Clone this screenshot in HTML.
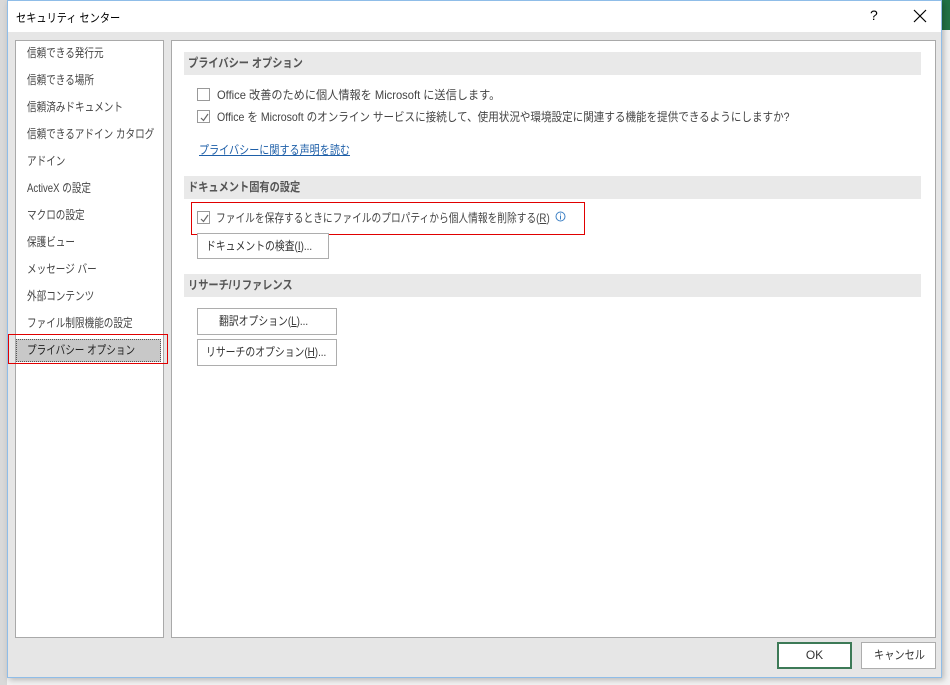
<!DOCTYPE html>
<html><head><meta charset="utf-8"><style>
*{box-sizing:border-box;margin:0;padding:0}
body{width:950px;height:685px;overflow:hidden;background:#f3f3f3;font-family:"Liberation Sans","Noto Sans CJK JP",sans-serif;font-size:12px;color:#444;position:relative}
.a{position:absolute;white-space:nowrap;transform-origin:0 50%}
.dlg{position:absolute;left:7px;top:0;width:935px;height:678px;background:#e6e6e6;border:1px solid #8fbde8;box-shadow:2px 2px 6px rgba(0,0,0,.25)}
.title{position:absolute;left:0;top:0;width:100%;height:31px;background:#fff}
.panel{position:absolute;background:#fff;border:1px solid #a9a9a9}
.hdr{position:absolute;left:184px;width:737px;height:23px;background:#e9e9e9}
.ht{font-weight:bold;color:#555;line-height:23px;transform:scaleX(.85)}
.cb{position:absolute;width:13px;height:13px;border:1px solid #999;background:#fff}
.cb svg{position:absolute;left:1px;top:1px}
.btn{position:absolute;border:1px solid #adadad;background:#fff}
.l{line-height:16px;transform:scaleX(.8)}
u{text-decoration:underline}
</style></head><body>
<div class="a" style="left:0;top:0;width:7px;height:685px;background:#d9d9d9"></div>
<div class="a" style="left:942px;top:0;width:8px;height:30px;background:#217346"></div>
<div class="dlg">
 <div class="title"></div>
 <div class="a" style="left:8px;top:8px;color:#000;transform:scaleX(.85)">セキュリティ センター</div>
 <div class="a" style="left:862px;top:6px;font-size:14px;color:#000">?</div>
 <svg class="a" style="left:905px;top:8px" width="14" height="14"><path d="M1 1L13 13M13 1L1 13" stroke="#000" stroke-width="1.2"/></svg>
</div>
<div class="panel" style="left:15px;top:40px;width:149px;height:598px"></div>
<div class="panel" style="left:171px;top:40px;width:765px;height:598px"></div>
<div class="a" style="left:16px;top:339px;width:145px;height:23px;background:#c8c8c8;border:1px dotted #555"></div>
<div class="a" style="left:8px;top:334px;width:160px;height:30px;border:1px solid #e00000"></div>
<div class="a l" style="left:27px;top:45px">信頼できる発行元</div>
<div class="a l" style="left:27px;top:72px">信頼できる場所</div>
<div class="a l" style="left:27px;top:99px">信頼済みドキュメント</div>
<div class="a l" style="left:27px;top:126px">信頼できるアドイン カタログ</div>
<div class="a l" style="left:27px;top:153px">アドイン</div>
<div class="a l" style="left:27px;top:180px">ActiveX の設定</div>
<div class="a l" style="left:27px;top:207px">マクロの設定</div>
<div class="a l" style="left:27px;top:234px">保護ビュー</div>
<div class="a l" style="left:27px;top:261px">メッセージ バー</div>
<div class="a l" style="left:27px;top:288px">外部コンテンツ</div>
<div class="a l" style="left:27px;top:315px">ファイル制限機能の設定</div>
<div class="a l" style="left:27px;top:342px;color:#222">プライバシー オプション</div>

<div class="hdr" style="top:52px"></div><div class="a ht" style="left:188px;top:52px">プライバシー オプション</div>
<div class="cb" style="left:197px;top:88px"></div>
<div class="a" style="left:217px;top:87px;line-height:16px;transform:scaleX(.93)">Office 改善のために個人情報を Microsoft に送信します。</div>
<div class="cb" style="left:197px;top:110px"><svg width="11" height="11"><path d="M2 6L4.5 8.5L9 2" stroke="#666" fill="none" stroke-width="1.2"/></svg></div>
<div class="a" style="left:217px;top:109px;line-height:16px;transform:scaleX(.88)">Office を Microsoft のオンライン サービスに接続して、使用状況や環境設定に関連する機能を提供できるようにしますか?</div>
<div class="a" style="left:199px;top:142px;line-height:16px;color:#1e5fa8;text-decoration:underline;transform:scaleX(.84)">プライバシーに関する声明を読む</div>

<div class="hdr" style="top:176px"></div><div class="a ht" style="left:188px;top:176px">ドキュメント固有の設定</div>
<div class="a" style="left:191px;top:202px;width:394px;height:33px;border:1px solid #e00000"></div>
<div class="cb" style="left:197px;top:211px"><svg width="11" height="11"><path d="M2 6L4.5 8.5L9 2" stroke="#666" fill="none" stroke-width="1.2"/></svg></div>
<div class="a" style="left:216px;top:210px;line-height:16px;transform:scaleX(.81)">ファイルを保存するときにファイルのプロパティから個人情報を削除する(<u>R</u>)</div>
<svg class="a" style="left:555px;top:211px" width="11" height="11"><circle cx="5.5" cy="5.5" r="4.5" fill="none" stroke="#3b7fc4"/><path d="M5.5 4.5V8.5M5.5 2.5V3.5" stroke="#3b7fc4"/></svg>
<div class="btn" style="left:197px;top:233px;width:132px;height:26px"></div>
<div class="a" style="left:206px;top:238px;line-height:16px;color:#333;transform:scaleX(.82)">ドキュメントの検査(<u>I</u>)...</div>

<div class="hdr" style="top:274px"></div><div class="a ht" style="left:188px;top:274px">リサーチ/リファレンス</div>
<div class="btn" style="left:197px;top:308px;width:140px;height:27px"></div>
<div class="a" style="left:219px;top:313px;line-height:16px;color:#333;transform:scaleX(.82)">翻訳オプション(<u>L</u>)...</div>
<div class="btn" style="left:197px;top:339px;width:140px;height:27px"></div>
<div class="a" style="left:206px;top:344px;line-height:16px;color:#333;transform:scaleX(.82)">リサーチのオプション(<u>H</u>)...</div>

<div class="btn" style="left:777px;top:642px;width:75px;height:27px;border:2px solid #3d7a57;text-align:center;line-height:23px;color:#333">OK</div>
<div class="btn" style="left:861px;top:642px;width:75px;height:27px"></div>
<div class="a" style="left:874px;top:647px;line-height:16px;color:#333;transform:scaleX(.85)">キャンセル</div>
</body></html>
